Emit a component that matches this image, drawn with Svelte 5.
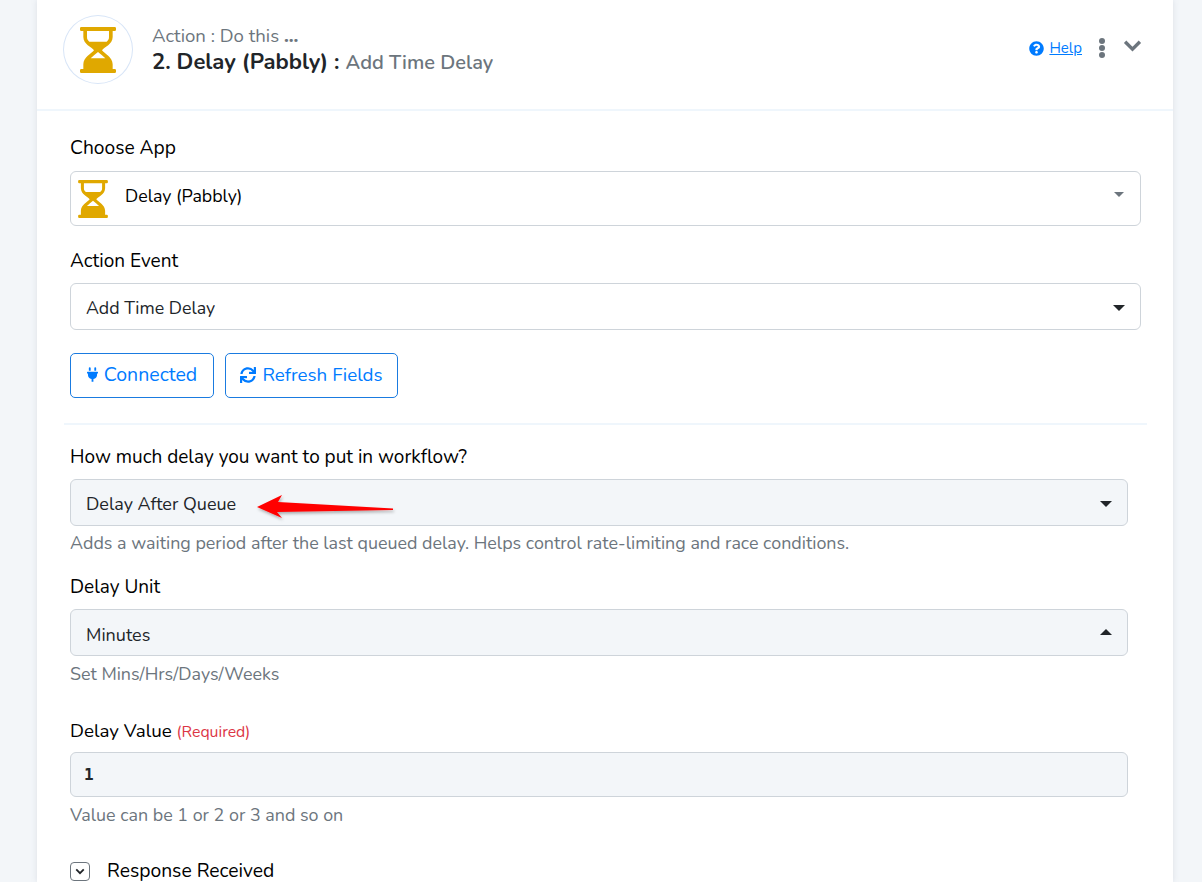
<script>
  const hourglass = "M4 0h100a4 4 0 0 1 4 4v4a4 4 0 0 1-4 4h-6v18c0 22-25 30-32 40 7 10 32 20 32 42v14h6a4 4 0 0 1 4 4v4a4 4 0 0 1-4 4H4a4 4 0 0 1-4-4v-4a4 4 0 0 1 4-4h6v-14c0-22 25-32 32-42-7-10-32-18-32-40V12H4a4 4 0 0 1-4-4V4a4 4 0 0 1 4-4zM21 12v18c0 8 3 10 7 14h52c4-4 7-6 7-14V12zM54 75c-7 6-15 12-22 19h44c-7-7-15-13-22-19z";
</script>

<div class="page">
  <section class="card">
    <header class="head">
      <div class="logo">
        <svg class="glass-lg" viewBox="0 0 108 138" aria-hidden="true"><path fill-rule="evenodd" d={hourglass} /></svg>
      </div>
      <div class="titles">
        <div class="kicker">Action : Do this <b>...</b></div>
        <div class="title"><strong>2. Delay (Pabbly) :</strong><span>Add Time Delay</span></div>
      </div>
      <div class="tools">
        <svg class="q" viewBox="0 0 512 512" aria-hidden="true"><path fill="#007bff" d="M504 256c0 136.997-111.043 248-248 248S8 392.997 8 256C8 119.083 119.043 8 256 8s248 111.083 248 248zM262.655 90c-54.497 0-89.255 22.957-116.549 63.758-3.536 5.286-2.353 12.415 2.715 16.258l34.699 26.31c5.205 3.947 12.621 3.008 16.665-2.122 17.864-22.658 30.113-35.797 57.303-35.797 20.429 0 45.698 13.148 45.698 32.958 0 14.976-12.363 22.667-32.534 33.976C247.128 238.528 216 254.941 216 296v4c0 6.627 5.373 12 12 12h56c6.627 0 12-5.373 12-12v-1.333c0-28.462 83.186-29.647 83.186-106.667 0-58.002-60.165-102-116.531-102zM256 338c-25.365 0-46 20.635-46 46 0 25.364 20.635 46 46 46s46-20.636 46-46c0-25.365-20.635-46-46-46z"/></svg>
        <a class="help" href="#help">Help</a>
        <span class="dots"><i></i><i></i><i></i></span>
        <svg class="chev" viewBox="0 0 18 12" aria-hidden="true"><path d="M2 2.500l7 7 7-7" fill="none" stroke="#6c757d" stroke-width="3.200"/></svg>
      </div>
    </header>

    <div class="body">
      <div class="label first">Choose App</div>
      <div class="control app">
        <svg class="glass-sm" viewBox="0 0 108 138" aria-hidden="true"><path fill-rule="evenodd" d={hourglass} /></svg>
        <span class="appname">Delay (Pabbly)</span>
        <span class="caret down grey"></span>
      </div>

      <div class="label l2">Action Event</div>
      <div class="control sel narrow">
        <span>Add Time Delay</span>
        <span class="caret down"></span>
      </div>

      <div class="buttons">
        <button class="btn b1">
          <svg class="plug" viewBox="0 0 384 512" aria-hidden="true"><path d="M320,32a32,32,0,0,0-64,0v96h64Zm48,128H16A16,16,0,0,0,0,176v32a16,16,0,0,0,16,16H32v32A160.07,160.07,0,0,0,160,412.8V512h64V412.8A160.07,160.07,0,0,0,352,256V224h16a16,16,0,0,0,16-16V176A16,16,0,0,0,368,160ZM128,32a32,32,0,0,0-64,0v96h64Z"/></svg>
          Connected
        </button>
        <button class="btn b2">
          <svg class="sync" viewBox="0 0 512 512" aria-hidden="true"><path d="M440.65 12.57l4 82.77A247.16 247.16 0 0 0 255.83 8C134.73 8 33.91 94.92 12.29 209.82A12 12 0 0 0 24.09 224h49.05a12 12 0 0 0 11.67-9.26 175.91 175.91 0 0 1 317-56.94l-101.46-4.86a12 12 0 0 0-12.57 12v47.41a12 12 0 0 0 12 12H500a12 12 0 0 0 12-12V12a12 12 0 0 0-12-12h-47.37a12 12 0 0 0-11.98 12.57zM255.83 432a175.61 175.61 0 0 1-146-77.8l101.8 4.87a12 12 0 0 0 12.57-12v-47.4a12 12 0 0 0-12-12H12a12 12 0 0 0-12 12V500a12 12 0 0 0 12 12h47.35a12 12 0 0 0 12-12.6l-4.15-82.57A247.17 247.17 0 0 0 255.83 504c121.11 0 221.93-86.92 243.55-201.82a12 12 0 0 0-11.8-14.18h-49.05a12 12 0 0 0-11.67 9.26A175.86 175.86 0 0 1 255.83 432z"/></svg>
          Refresh Fields
        </button>
      </div>

      <hr class="rule" />

      <div class="label l3">How much delay you want to put in workflow?</div>
      <div class="control sel filled">
        <span>Delay After Queue</span>
        <span class="caret down"></span>
        <svg class="arrow" viewBox="0 0 142 36" aria-hidden="true">
          <defs><filter id="s" x="-10%" y="-40%" width="120%" height="200%"><feDropShadow dx="1" dy="2" stdDeviation="1.500" flood-color="#000" flood-opacity=".3"/></filter></defs>
          <path d="M1 18L26 6l-4 7 115 6.500v1.500L21 23l5 6z" fill="#ff0000" filter="url(#s)"/>
        </svg>
      </div>
      <div class="hint h1">Adds a waiting period after the last queued delay. Helps control rate-limiting and race conditions.</div>

      <div class="label l4">Delay Unit</div>
      <div class="control sel filled minutes">
        <span>Minutes</span>
        <span class="caret up"></span>
      </div>
      <div class="hint">Set Mins/Hrs/Days/Weeks</div>

      <div class="label l5">Delay Value <span class="req">(Required)</span></div>
      <div class="control sel filled value"><span>1</span></div>
      <div class="hint">Value can be 1 or 2 or 3 and so on</div>

      <div class="resp">
        <span class="toggle"><svg viewBox="0 0 12 8" aria-hidden="true"><path d="M1.500 1.500l4.500 4.500 4.500-4.500" fill="none" stroke="#212529" stroke-width="2.200"/></svg></span>
        <span>Response Received</span>
      </div>
    </div>
  </section>
</div>

<style>
  :global(body) { margin: 0; background: #f3f6f9; overflow: hidden; }
  .page { height: 882px; overflow: hidden; padding-left: 37px; font-family: "Nunito", "Noto Sans", sans-serif; font-size: 18px; color: #000; box-sizing: border-box; width: 1202px; }
  .card { width: 1136px; background: #fff; box-shadow: 0 0 6px rgba(120,130,150,.18); height: 100%; }
  .head { height: 109px; border-bottom: 2px solid #eff6fc; display: flex; align-items: flex-start; box-sizing: content-box; }
  .logo { width: 70px; height: 69px; margin: 15px 0 0 26px; border: 1px solid #d8e5f7; border-radius: 50%; display: flex; align-items: center; justify-content: center; flex: none; box-sizing: border-box; }
  .glass-lg { width: 36px; height: 46px; fill: #e0a800; }
  .titles { margin: 24px 0 0 19px; }
  .kicker { font-size: 18.600px; line-height: 25px; color: #6c757d; }
  .kicker b { font-weight: 800; }
  .title { font-size: 20px; line-height: 27px; font-weight: 600; color: #6c757d; display: flex; align-items: baseline; gap: 6px; }
  .title strong { color: #212529; font-weight: 700; font-size: 22px; }
  .tools { margin-left: auto; display: flex; align-items: center; margin-top: 37px; padding-right: 31px; }
  .q { width: 15px; height: 15px; margin-right: 5px; }
  .help { color: #007bff; font-size: 15px; line-height: 22px; }
  .dots { display: flex; flex-direction: column; gap: 1px; margin: 0 18px 0 17px; }
  .dots i { width: 6px; height: 6px; background: #6c757d; border-radius: 50%; }
  .chev { width: 19px; height: 13px; margin-top: -6px; }
  .body { padding: 0 32px 0 33px; }
  .label { line-height: 24px; font-size: 19px; }
  .first { margin-top: 25px; font-size: 19.200px; }
  .control { box-sizing: border-box; position: relative; border: 1px solid #ced4da; border-radius: 6px; display: flex; align-items: center; }
  .app { height: 55px; margin-top: 11px; }
  .glass-sm { width: 30px; height: 38px; fill: #e0a800; margin-left: 7px; flex: none; }
  .appname { margin-left: 17px; margin-top: -6px; font-size: 17.800px; }
  .sel { height: 47px; padding-left: 15px; color: #212529; }
  .sel > span:first-child { padding-top: 2px; }
  .minutes > span:first-child { padding-top: 4px; }
  .narrow { font-size: 17.800px; }
  .l2 { margin-top: 23px; margin-bottom: 10px; }
  .caret { position: absolute; right: 15px; top: 50%; width: 0; height: 0; border-left: 6px solid transparent; border-right: 6px solid transparent; }
  .caret.down { border-top: 6px solid #212529; margin-top: -2px; }
  .caret.up { border-bottom: 6px solid #212529; margin-top: -4px; }
  .caret.grey { border-left-width: 5px; border-right-width: 5px; border-top: 5px solid #6c757d; margin-top: -7px; right: 16px; }
  .buttons { display: flex; gap: 11px; margin-top: 23px; }
  .btn { height: 45px; border: 1px solid #1a7be0; border-radius: 5px; background: #fff; color: #007bff; font: inherit; font-size: 19px; padding: 0 0 2px; display: flex; align-items: center; justify-content: center; gap: 6px; box-sizing: border-box; }
  .b1 { width: 144px; font-size: 19.500px; }
  .b2 { width: 173px; font-size: 18.800px; }
  .plug { width: 11px; height: 15px; fill: #007bff; }
  .sync { width: 16px; height: 16px; fill: #007bff; }
  .rule { border: 0; border-top: 2px solid #eff6fc; margin: 25px -6px 0 -6px; }
  .l3 { margin-top: 20px; margin-bottom: 10px; }
  .filled { width: 1058px; background: #f3f6f9; }
  .arrow { position: absolute; left: 185px; top: 9px; width: 142px; height: 36px; }
  .hint { color: #6c757d; line-height: 24px; margin-top: 6px; font-size: 17.900px; }
  .h1 { margin-top: 5px; }
  .l4 { margin-top: 20px; margin-bottom: 10px; }
  .l5 { margin-top: 33px; margin-bottom: 8px; font-size: 18.800px; }
  .req { color: #dc3545; font-size: 15.800px; }
  .value { height: 45px; font-family: "DejaVu Sans Mono", monospace; font-size: 16px; font-weight: 700; }
  .value span { margin-left: -2px; padding-top: 0 !important; }
  .resp { display: flex; align-items: center; gap: 17px; margin-top: 34px; line-height: 20px; font-size: 19.300px; }
  .toggle { width: 20px; height: 19px; border: 1px solid #6c757d; border-radius: 4px; box-sizing: border-box; display: flex; align-items: center; justify-content: center; flex: none; }
  .toggle svg { width: 10px; height: 7px; }
</style>
